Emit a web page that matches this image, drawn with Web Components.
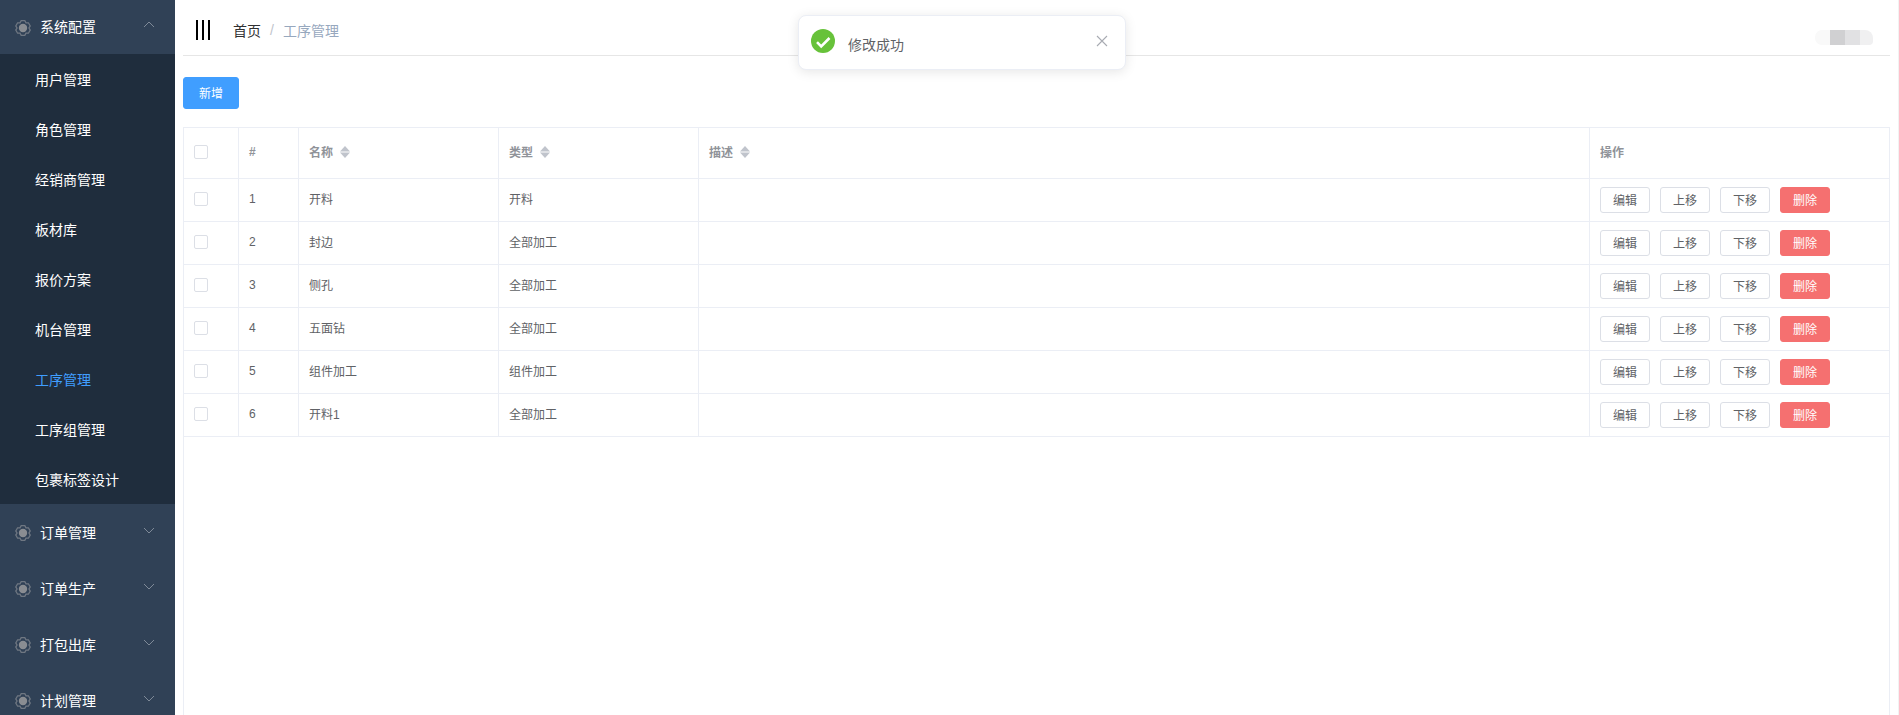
<!DOCTYPE html>
<html lang="zh"><head><meta charset="utf-8">
<style>
html,body{margin:0;height:715px;overflow:hidden;background:#fff}
body{font-family:"Liberation Sans","Noto Sans CJK SC",sans-serif;color:#606266}
</style></head>
<body>
<admin-app></admin-app>
<script>
const gearPath=(()=>{let p=[];for(let k=0;k<6;k++){const a=k*60+30;[[a-14,7.5],[a+14,7.5],[a+30,6]].forEach(([d,r])=>{const t=d*Math.PI/180;p.push((8+r*Math.cos(t)).toFixed(2)+" "+(8+r*Math.sin(t)).toFixed(2));});}return "M"+p.join("L")+"z";})();
const gear=`<svg width="16" height="16" viewBox="0 0 16 16"><path d="${gearPath}" fill="none" stroke="#6f7782" stroke-width="1.300"/><circle cx="8" cy="8" r="4.200" fill="#8a8d92"/></svg>`;
function def(name,css,html){
  customElements.define(name,class extends HTMLElement{
    constructor(){super();const r=this.attachShadow({mode:"open"});r.innerHTML=`<style>${css}</style>${typeof html==="function"?html(this):html}`;}
  });
}
def("side-group",`:host{display:block;background:#304156}
.t{display:flex;align-items:center;height:var(--h,56px);padding-left:15px;color:#fff;font-size:14px;box-sizing:border-box}
.l{margin-left:9px;flex:1;padding-bottom:var(--pb,0)}
.g{display:flex;padding-top:1px}
.c{width:12px;height:12px;margin-right:20px;padding-bottom:4px;display:flex}
.s{display:block;background:#1f2d3d}`,
el=>`<div class="t" style="${el.hasAttribute('open')?'--h:54px;--pb:2px':''}"><span class="g">${gear}</span><span class="l">${el.getAttribute('label')}</span>
<span class="c"><svg width="12" height="12" viewBox="0 0 12 12" fill="none" stroke="#7f8a98" stroke-width="1"><path d="${el.hasAttribute('open')?'M1 8l5-5 5 5':'M1 4l5 5 5-5'}"/></svg></span></div><div class="s"><slot></slot></div>`);
def("side-item",`:host{display:flex;align-items:center;height:50px;padding-left:35px;font-size:14px;color:#fff;background:#1f2d3d}
:host([active]){color:#409eff}`,`<slot></slot>`);
def("side-bar",`:host{display:block;width:175px;height:715px;background:#304156;overflow:hidden;flex:none}`,`<slot></slot>`);
def("bread-crumb",`:host{display:flex;align-items:center;font-size:14px;font-weight:400;color:#303133;gap:9px;padding-top:4px}
.s{color:#c0c4cc}.c{color:#97a8be}`,`<span>首页</span><span class="s">/</span><span class="c"><slot></slot></span>`);
def("blur-avatar",`:host{display:flex;height:15px;width:58px;border-radius:7px 8px 4px 7px;overflow:hidden}
i{display:block;width:15px}`,`<i style="background:#f9f9f9"></i><i style="background:#d0d0d2"></i><i style="background:#e1e1e3"></i><i style="background:#f0f0f1;width:13px"></i>`);
def("top-bar",`:host{display:flex;align-items:center;height:55px;border-bottom:1px solid #e6e6e6;margin-left:8px;margin-right:8px;padding-left:13px;padding-right:17px}
.h{display:flex;gap:4px;width:15px;height:20px;margin-right:22px;padding-top:5px}
.h i{display:block;width:2px;height:20px;background:#000}
.sp{flex:1}
blur-avatar{margin-top:20px}`,
`<span class="h"><i></i><i></i><i></i></span><bread-crumb>工序管理</bread-crumb><span class="sp"></span><blur-avatar></blur-avatar>`);
def("ui-btn",`:host{display:inline-flex;align-items:center;justify-content:center;box-sizing:border-box;width:50px;height:26px;padding-bottom:1px;font-size:12px;border:1px solid #dcdfe6;border-radius:3px;color:#606266;background:#fff}
:host([kind=danger]){background:#f56c6c;border-color:#f56c6c;color:#fff;opacity:.97}
:host([kind=primary]){background:#409eff;border-color:#409eff;color:#fff;width:56px;height:32px;border-radius:3px;padding-bottom:2px}`,`<slot></slot>`);
def("ui-check",`:host{display:block;width:14px;height:14px;box-sizing:border-box;border:1px solid #dcdfe6;border-radius:2px;background:#fff}`,``);
def("sort-caret",`:host{display:inline-flex;margin-left:7px}`,`<svg width="10" height="12" viewBox="0 0 10 12"><path d="M5 0l5 5.500H0z" fill="#c0c4cc"/><path d="M5 12l5-5.500H0z" fill="#c0c4cc"/></svg>`);
const cols="55px 60px 200px 200px 891px 1fr";
const cell=`.c{border-right:1px solid #ebeef5;padding-left:10px;padding-bottom:3px;display:flex;align-items:center;box-sizing:border-box;min-width:0}.c:last-child{border-right:0}.k{padding-bottom:2px}.a{padding-bottom:0;gap:10px}`;
def("table-head",`:host{display:grid;grid-template-columns:${cols};height:50px;border-bottom:1px solid #ebeef5;font-size:12px;font-weight:700;color:#909399}
${cell}`,
`<div class="c k"><ui-check></ui-check></div><div class="c">#</div><div class="c">名称<sort-caret></sort-caret></div><div class="c">类型<sort-caret></sort-caret></div><div class="c">描述<sort-caret></sort-caret></div><div class="c">操作</div>`);
def("table-row",`:host{display:grid;grid-template-columns:${cols};height:42px;border-bottom:1px solid #ebeef5;font-size:12px;color:#606266}
${cell}`,
el=>`<div class="c k"><ui-check></ui-check></div><div class="c">${el.getAttribute('n')}</div><div class="c">${el.getAttribute('name')}</div><div class="c">${el.getAttribute('type')}</div><div class="c"></div><div class="c a"><ui-btn>编辑</ui-btn><ui-btn>上移</ui-btn><ui-btn>下移</ui-btn><ui-btn kind="danger">删除</ui-btn></div>`);
def("data-table",`:host{display:block;margin-top:18px;height:588px;border:1px solid #ebeef5;border-bottom:0;box-sizing:border-box;overflow:hidden}`,`<slot></slot>`);
def("toast-note",`:host{position:absolute;left:798px;top:15px;width:328px;height:55px;box-sizing:border-box;border:1px solid #ebeef5;border-radius:8px;background:#fff;box-shadow:0 2px 12px rgba(0,0,0,.1);font-size:14px;color:#606266}
.i{position:absolute;left:12px;top:13px;display:flex}
.t{position:absolute;left:49px;top:19px;line-height:20px}
.x{position:absolute;left:297px;top:19px;display:flex}`,
`<span class="i"><svg width="24" height="24" viewBox="0 0 24 24"><circle cx="12" cy="12" r="12" fill="#67c23a"/><path d="M6 13.200l4.200 4.200L18.500 9" fill="none" stroke="#fff" stroke-width="2.600"/></svg></span><span class="t"><slot></slot></span><span class="x"><svg width="12" height="12" viewBox="0 0 12 12"><path d="M1 1l10 10M11 1L1 11" stroke="#a8abb2" stroke-width="1.100"/></svg></span>`);
def("admin-app",`:host{display:flex;width:1899px;height:715px;position:relative;overflow:hidden}
main{flex:1;min-width:0;display:block;border-right:1px solid #f2f2f2;box-sizing:border-box}
.body{padding:21px 8px 0 8px}`,
`<side-bar>
<side-group label="系统配置" open><side-item>用户管理</side-item><side-item>角色管理</side-item><side-item>经销商管理</side-item><side-item>板材库</side-item><side-item>报价方案</side-item><side-item>机台管理</side-item><side-item active>工序管理</side-item><side-item>工序组管理</side-item><side-item>包裹标签设计</side-item></side-group>
<side-group label="订单管理"></side-group><side-group label="订单生产"></side-group><side-group label="打包出库"></side-group><side-group label="计划管理"></side-group>
</side-bar>
<main><top-bar></top-bar><div class="body"><ui-btn kind="primary">新增</ui-btn>
<data-table><table-head></table-head>
<table-row n="1" name="开料" type="开料"></table-row>
<table-row n="2" name="封边" type="全部加工"></table-row>
<table-row n="3" name="侧孔" type="全部加工"></table-row>
<table-row n="4" name="五面钻" type="全部加工"></table-row>
<table-row n="5" name="组件加工" type="组件加工"></table-row>
<table-row n="6" name="开料1" type="全部加工"></table-row>
</data-table></div></main>
<toast-note>修改成功</toast-note>`);
</script>
</body></html>
